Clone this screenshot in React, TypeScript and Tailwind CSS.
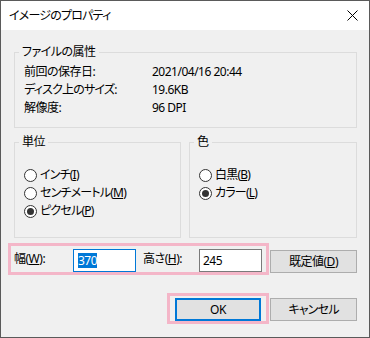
const font = "[font-family:'Noto_Sans','Noto_Sans_CJK_JP',sans-serif] [font-feature-settings:'palt'] tracking-[-0.5px]";

function Radio({ checked, children }: { checked?: boolean; children: React.ReactNode }) {
  return (
    <div className="flex items-center h-[18px] ml-[5px]">
      <span className="w-[13px] h-[13px] rounded-full border border-[#333] bg-white flex items-center justify-center shrink-0">
        {checked && <span className="w-[7px] h-[7px] rounded-full bg-[#333]" />}
      </span>
      <span className="ml-[3px] leading-[18px] tracking-[-0.8px]">{children}</span>
    </div>
  );
}

function Group({ title, className, children }: { title: string; className: string; children: React.ReactNode }) {
  return (
    <fieldset className={`border border-[#dcdcdc] px-[4px] ${className}`}>
      <legend className="px-[3px] leading-[16px]">{title}</legend>
      {children}
    </fieldset>
  );
}

function Btn({ children, className = "" }: { children: React.ReactNode; className?: string }) {
  return (
    <button className={`w-[87px] h-[23px] bg-[#e1e1e1] border border-[#adadad] flex items-center justify-center leading-none ${className}`}>
      {children}
    </button>
  );
}

export default function App() {
  return (
    <div className={`w-[370px] h-[338px] border border-[#5a5a5a] bg-[#f0f0f0] flex flex-col text-[12px] text-black ${font}`}>
      {/* Title bar */}
      <div className="h-[29px] bg-white flex items-center justify-between pl-[8px] pr-[11px] shrink-0">
        <span className="leading-none tracking-[-0.8px]">イメージのプロパティ</span>
        <svg width="11" height="11" viewBox="0 0 11 11" className="block">
          <path d="M0.5 0.5 L10.5 10.5 M10.5 0.5 L0.5 10.5" stroke="#000" strokeWidth="1" />
        </svg>
      </div>

      <div className="flex flex-col pl-[13px] pr-[12px] pt-[14px]">
        {/* ファイルの属性 */}
        <Group title="ファイルの属性" className="pt-[3px] pb-[10px]">
          <div className="ml-[5px] grid grid-cols-[128px_1fr] leading-[18px]">
            <span>前回の保存日:</span>
            <span>2021/04/16 20:44</span>
            <span className="tracking-[-0.8px]">ディスク上のサイズ:</span>
            <span>19.6KB</span>
            <span>解像度:</span>
            <span>96 DPI</span>
          </div>
        </Group>

        <div className="flex gap-[8px] mt-[6px]">
          <Group title="単位" className="w-[167px] pt-[16px] pb-[17px]">
            <Radio>インチ(<u>I</u>)</Radio>
            <Radio>センチメートル(<u>M</u>)</Radio>
            <Radio checked>ピクセル(<u>P</u>)</Radio>
          </Group>
          <Group title="色" className="flex-1 pt-[16px] pb-[17px]">
            <Radio>白黒(<u>B</u>)</Radio>
            <Radio checked>カラー(<u>L</u>)</Radio>
          </Group>
        </div>

        {/* size row */}
        <div className="flex items-start mt-[5px] -ml-[6px]">
          <div className="w-[261px] h-[32px] border-[3px] border-[#f4b6c8] flex items-start pl-[3px] pr-[4px]">
            <span className="w-[59px] leading-[26px]">幅(<u>W</u>):</span>
            <div className="mt-[3px] w-[63px] h-[23px] bg-white border border-[#0078d7] flex items-center px-[4px]">
              <span className="bg-[#0078d7] text-white leading-[15px]">370</span>
            </div>
            <span className="ml-[7px] w-[56px] leading-[26px]">高さ(<u>H</u>):</span>
            <div className="mt-[3px] w-[63px] h-[23px] bg-white border border-[#7a7a7a] flex items-center px-[3px]">
              <span className="leading-[15px]">245</span>
            </div>
          </div>
          <Btn className="ml-[1px] mt-[7px]">既定値(<u>D</u>)</Btn>
        </div>

        {/* OK / Cancel */}
        <div className="flex items-start justify-end mt-[18px]">
          <div className="w-[102px] h-[31px] border-[3px] border-[#f4b6c8] pl-[5px] pt-[2px]">
            <button className="w-[86px] h-[23px] bg-[#e1e1e1] border-2 border-[#0078d7] flex items-center justify-center leading-none">
              OK
            </button>
          </div>
          <Btn className="ml-[1px] mt-[5px] tracking-[-0.8px]">キャンセル</Btn>
        </div>
      </div>
    </div>
  );
}
